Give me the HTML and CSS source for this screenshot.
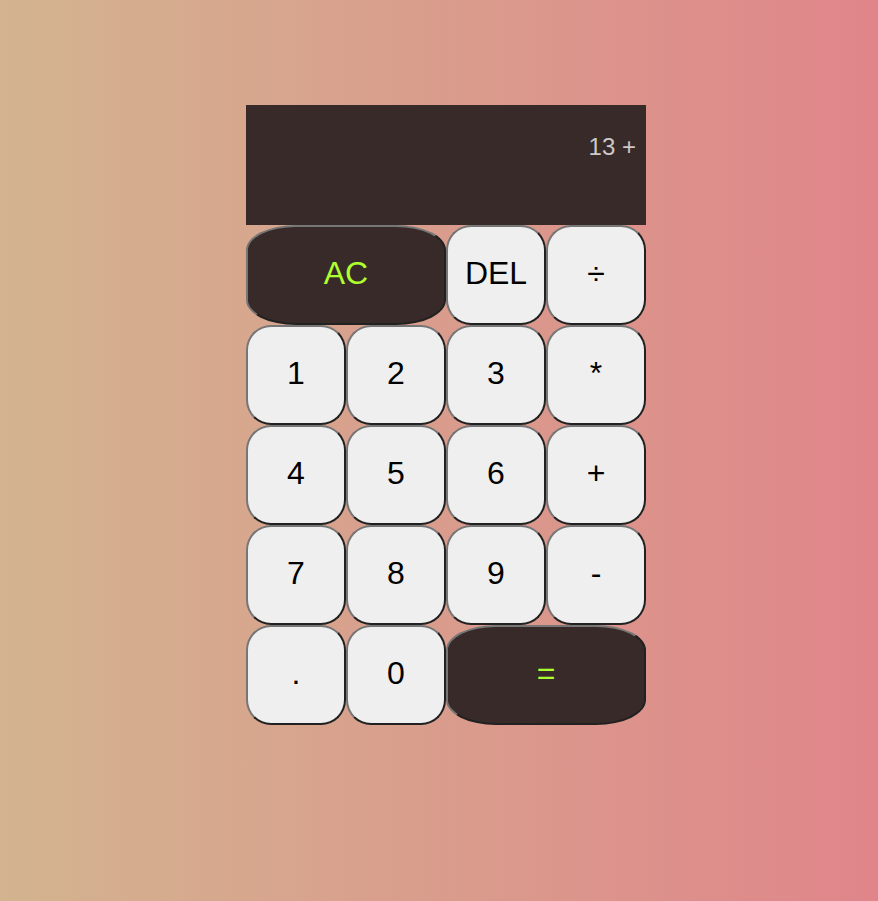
FILE: index.html
```html
<!DOCTYPE html>
<html lang="en">
<head>
<meta charset="UTF-8">
<title>Calculator</title>
<link rel="stylesheet" href="styles.css">
</head>
<body>
<div class="calculator">
  <div class="output">
    <div class="previous">13 +</div>
    <div class="current"></div>
  </div>
  <button class="span-two dark">AC</button>
  <button>DEL</button>
  <button>÷</button>
  <button>1</button>
  <button>2</button>
  <button>3</button>
  <button>*</button>
  <button>4</button>
  <button>5</button>
  <button>6</button>
  <button>+</button>
  <button>7</button>
  <button>8</button>
  <button>9</button>
  <button>-</button>
  <button>.</button>
  <button>0</button>
  <button class="span-two dark">=</button>
</div>
</body>
</html>
```
FILE: styles.css
```css
*, *::before, *::after {
  box-sizing: border-box;
}

html, body {
  margin: 0;
  padding: 0;
}

body {
  min-height: 100vh;
  background: linear-gradient(to right, #d3b48f, #e0858a);
  font-family: "Liberation Sans", Arial, sans-serif;
}

.calculator {
  display: grid;
  justify-content: center;
  grid-template-columns: repeat(4, 100px);
  grid-template-rows: 120px repeat(5, 100px);
  padding: 105px 0 0 14px;
}

.output {
  grid-column: 1 / -1;
  background-color: #372a28;
  display: flex;
  flex-direction: column;
  align-items: flex-end;
  padding: 28px 10px 10px;
}

.previous {
  color: rgba(255, 255, 255, 0.75);
  font-size: 1.5rem;
}

.current {
  color: #fff;
  font-size: 2.5rem;
}

.calculator button {
  font-family: "Liberation Sans", Arial, sans-serif;
  font-size: 2rem;
  color: #000;
  background-color: #efefef;
  border: 2px outset #767676;
  border-radius: 25%;
  padding: 0 0 3px;
  margin: 0;
  cursor: pointer;
}

.calculator .span-two {
  grid-column: span 2;
}

.calculator .dark {
  background-color: #372a28;
  color: #adff2f;
}
```
